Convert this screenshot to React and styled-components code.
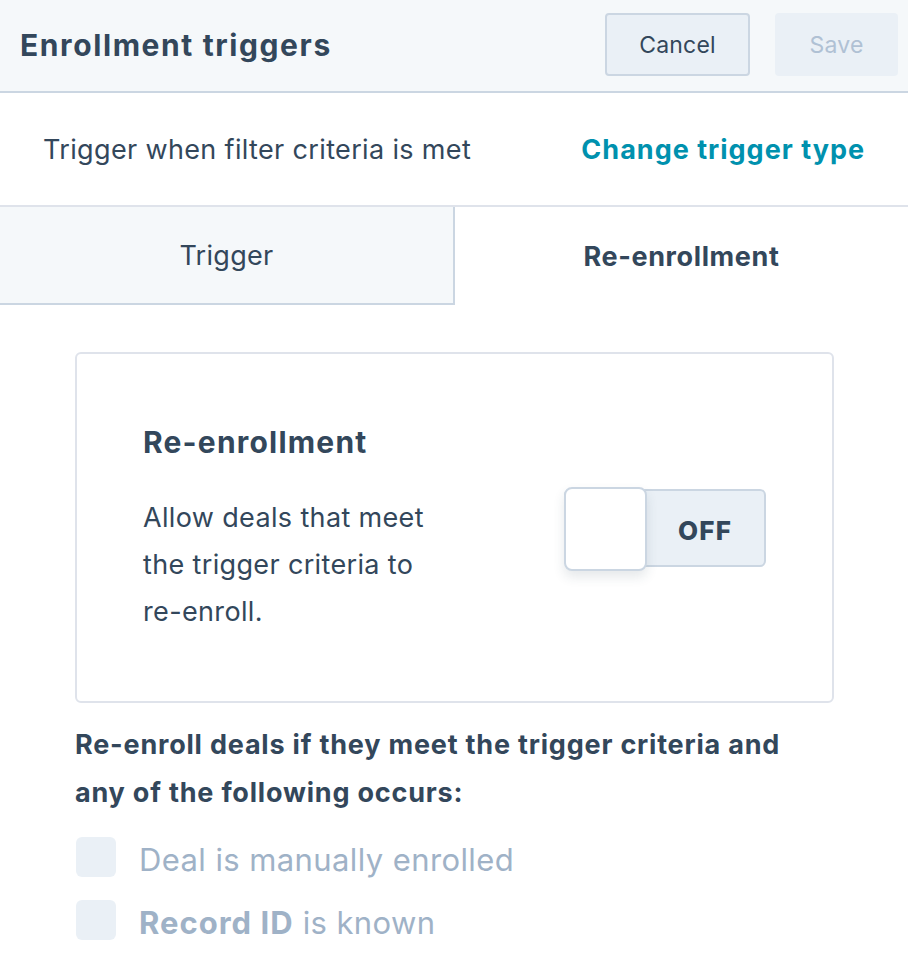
import React from "react";
import styled, { createGlobalStyle } from "styled-components";

const Global = createGlobalStyle`
  html, body { margin: 0; padding: 0; background: #ffffff; }
  body { font-family: Inter, "Noto Sans", sans-serif; color: #33475b; -webkit-font-smoothing: antialiased; }
  * { box-sizing: border-box; }
`;

const Page = styled.div`
  width: 908px;
  min-height: 972px;
  background: #ffffff;
`;

const Header = styled.header`
  height: 93px;
  display: flex;
  align-items: center;
  justify-content: space-between;
  padding: 0 10px 2px 20px;
  background: #f5f8fa;
  border-bottom: 2px solid #cbd6e2;
`;

const Title = styled.h1`
  margin: 0;
  font-size: 30px;
  font-weight: 700;
  letter-spacing: 1.6px;
  color: #33475b;
`;

const Actions = styled.div`
  display: flex;
  gap: 25px;
`;

const Button = styled.button`
  height: 63px;
  width: ${(p) => p.$w}px;
  border-radius: 4px;
  font-family: inherit;
  font-size: 23px;
  font-weight: 400;
  letter-spacing: 0.2px;
  padding: 0;
  background: #eaf0f6;
  border: 2px solid ${(p) => (p.$disabled ? "#eaf0f6" : "#cbd6e2")};
  color: ${(p) => (p.$disabled ? "#b0c1d4" : "#33475b")};
  cursor: ${(p) => (p.$disabled ? "default" : "pointer")};
`;

const TypeRow = styled.div`
  height: 114px;
  display: flex;
  align-items: center;
  justify-content: space-between;
  padding: 0 43px;
  border-bottom: 2px solid #dfe3eb;
`;

const TypeText = styled.span`
  font-size: 27px;
  letter-spacing: 0.35px;
  color: #33475b;
`;

const Link = styled.a`
  font-size: 27px;
  font-weight: 700;
  letter-spacing: 1px;
  color: #0091ae;
  text-decoration: none;
  cursor: pointer;
`;

const Tabs = styled.div`
  display: grid;
  grid-template-columns: 455px 1fr;
  height: 98px;
`;

const Tab = styled.div`
  display: flex;
  align-items: center;
  justify-content: center;
  font-size: 27px;
  font-weight: ${(p) => (p.$active ? 700 : 400)};
  letter-spacing: ${(p) => (p.$active ? "0.6px" : "0.3px")};
  color: #33475b;
  background: ${(p) => (p.$active ? "#ffffff" : "#f5f8fa")};
  border-right: ${(p) => (p.$active ? "none" : "2px solid #cbd6e2")};
  border-bottom: ${(p) => (p.$active ? "none" : "2px solid #cbd6e2")};
`;

const Content = styled.div`
  padding: 47px 74px 0 75px;
`;

const Card = styled.section`
  height: 351px;
  border: 2px solid #dfe3eb;
  border-radius: 6px;
  padding: 0 66px;
  display: flex;
  align-items: center;
  justify-content: space-between;
`;

const CardText = styled.div`
  width: 310px;
  padding-top: 4px;
`;

const CardTitle = styled.h2`
  margin: 0 0 35px;
  font-size: 30px;
  line-height: 34px;
  font-weight: 700;
  letter-spacing: 1.2px;
  color: #33475b;
`;

const Paragraph = styled.p`
  margin: 0;
  font-size: 27px;
  line-height: 47px;
  letter-spacing: 0.35px;
  color: #33475b;
`;

const Toggle = styled.div`
  position: relative;
  width: 202px;
  height: 78px;
  background: #eaf0f6;
  border: 2px solid #cbd6e2;
  border-radius: 6px;
  display: flex;
  align-items: center;
  justify-content: flex-end;
`;

const Knob = styled.span`
  position: absolute;
  left: -2px;
  top: -4px;
  width: 83px;
  height: 84px;
  background: #ffffff;
  border: 2px solid #cbd6e2;
  border-radius: 8px;
  box-shadow: 0 6px 12px rgba(45, 62, 80, 0.12);
`;

const ToggleLabel = styled.span`
  width: 118px;
  padding-top: 5px;
  text-align: center;
  font-size: 26px;
  font-weight: 800;
  letter-spacing: 1.2px;
  color: #33475b;
`;

const Question = styled.p`
  max-width: 730px;
  margin: 18px 0 20px;
  font-size: 27px;
  line-height: 48px;
  font-weight: 700;
  letter-spacing: 0.8px;
  color: #33475b;
`;

const Options = styled.div`
  display: flex;
  flex-direction: column;
  gap: 23px;
`;

const Option = styled.label`
  height: 40px;
  display: flex;
  align-items: center;
  gap: 23px;
  padding-left: 1px;
  font-size: 31px;
  letter-spacing: 0.4px;
  color: #9fb2c7;
`;

const OptionText = styled.span`
  padding-top: 4px;
  b { letter-spacing: 1px; }
`;

const Box = styled.span`
  width: 40px;
  height: 40px;
  border-radius: 6px;
  background: #eaf0f6;
  flex: none;
`;

export default function App() {
  return (
    <Page>
      <Global />
      <Header>
        <Title>Enrollment triggers</Title>
        <Actions>
          <Button $w={145}>Cancel</Button>
          <Button $w={123} $disabled>Save</Button>
        </Actions>
      </Header>
      <TypeRow>
        <TypeText>Trigger when filter criteria is met</TypeText>
        <Link>Change trigger type</Link>
      </TypeRow>
      <Tabs>
        <Tab>Trigger</Tab>
        <Tab $active>Re-enrollment</Tab>
      </Tabs>
      <Content>
        <Card>
          <CardText>
            <CardTitle>Re-enrollment</CardTitle>
            <Paragraph>Allow deals that meet the trigger criteria to re-enroll.</Paragraph>
          </CardText>
          <Toggle>
            <Knob />
            <ToggleLabel>OFF</ToggleLabel>
          </Toggle>
        </Card>
        <Question>
          Re-enroll deals if they meet the trigger criteria and any of the following occurs:
        </Question>
        <Options>
          <Option><Box /><OptionText>Deal is manually enrolled</OptionText></Option>
          <Option><Box /><OptionText><b>Record ID</b> is known</OptionText></Option>
        </Options>
      </Content>
    </Page>
  );
}
